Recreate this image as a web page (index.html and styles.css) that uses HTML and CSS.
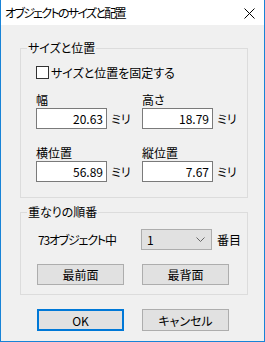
FILE: index.html
```html
<!DOCTYPE html>
<html lang="ja">
<head>
    <meta charset="UTF-8">
    <title>オブジェクトのサイズと配置</title>
    <link rel="stylesheet" href="styles.css">
</head>
<body>
    <div class="window">
        <div class="titlebar">
            <span class="title">オブジェクトのサイズと配置</span>
            <svg class="close" width="11" height="11" viewBox="0 0 11 11">
                <path d="M0.5 0.5 L10.5 10.5 M10.5 0.5 L0.5 10.5" stroke="#000" stroke-width="1" fill="none"/>
            </svg>
        </div>
        <div class="content">
            <fieldset class="group size-group">
                <legend>サイズと位置</legend>
                <label class="check"><span class="box"></span>サイズと位置を固定する</label>
                <div class="fields">
                    <div class="field">
                        <div class="field-label">幅</div>
                        <div class="field-row"><div class="input">20.63</div><span>ミリ</span></div>
                    </div>
                    <div class="field">
                        <div class="field-label">高さ</div>
                        <div class="field-row"><div class="input">18.79</div><span>ミリ</span></div>
                    </div>
                    <div class="field">
                        <div class="field-label">横位置</div>
                        <div class="field-row"><div class="input">56.89</div><span>ミリ</span></div>
                    </div>
                    <div class="field">
                        <div class="field-label">縦位置</div>
                        <div class="field-row"><div class="input">7.67</div><span>ミリ</span></div>
                    </div>
                </div>
            </fieldset>
            <fieldset class="group order-group">
                <legend>重なりの順番</legend>
                <div class="order-row">
                    <span class="count">73オブジェクト中</span>
                    <div class="select">
                        <span>1</span>
                        <svg width="9" height="5" viewBox="0 0 9 5">
                            <path d="M0.5 0.5 L4.5 4.5 L8.5 0.5" stroke="#666" stroke-width="1" fill="none"/>
                        </svg>
                    </div>
                    <span>番目</span>
                </div>
                <div class="btn-row">
                    <button class="btn">最前面</button>
                    <button class="btn">最背面</button>
                </div>
            </fieldset>
            <div class="dialog-buttons">
                <button class="btn default">OK</button>
                <button class="btn">キャンセル</button>
            </div>
        </div>
    </div>
</body>
</html>
```

FILE: styles.css
```css
body {
    margin: 0;
    font-family: "Noto Sans CJK JP", sans-serif;
    font-size: 12px;
    font-feature-settings: "palt";
    color: #000;
}
.window {
    width: 265px;
    height: 342px;
    box-sizing: border-box;
    border: 1px solid #1883d7;
    border-top: none;
    background-color: #f0f0f0;
    display: flex;
    flex-direction: column;
    overflow: hidden;
}
.titlebar {
    height: 25px;
    flex-shrink: 0;
    background-color: #fff;
    display: flex;
    align-items: center;
    justify-content: space-between;
    padding-left: 4px;
}
.title {
    line-height: 16px;
    letter-spacing: -1.7px;
    white-space: nowrap;
}
.close {
    margin-right: 9px;
    margin-top: 2px;
}
.content {
    padding: 16px 16px 0 19px;
}
.group {
    margin: 0;
    border: 1px solid #dcdcdc;
    min-width: 0;
}
.group legend {
    padding: 0 1px;
    margin-left: -9px;
    line-height: 14px;
}
.size-group {
    padding: 10px 0 15px 15px;
}
.check {
    display: flex;
    align-items: center;
    height: 15px;
    line-height: 15px;
    white-space: nowrap;
}
.box {
    width: 13px;
    height: 13px;
    box-sizing: border-box;
    border: 1px solid #333;
    background-color: #fff;
    margin-right: 2px;
}
.fields {
    display: grid;
    grid-template-columns: 106px 90px;
    row-gap: 17px;
    margin-top: 13px;
}
.field-label {
    line-height: 14px;
    white-space: nowrap;
}
.field-row {
    display: flex;
    align-items: center;
    margin-top: 1px;
    white-space: nowrap;
}
.input {
    flex-shrink: 0;
    width: 71px;
    height: 21px;
    box-sizing: border-box;
    border: 1px solid #7a7a7a;
    background-color: #fff;
    text-align: right;
    padding-right: 3px;
    line-height: 19px;
    margin-right: 4px;
}
.order-group {
    margin-top: 7px;
    padding: 10px 0 9px 15px;
}
.order-row {
    display: flex;
    align-items: center;
    height: 21px;
    white-space: nowrap;
}
.count {
    width: 105px;
    flex-shrink: 0;
    box-sizing: border-box;
    padding-left: 2px;
    letter-spacing: -1.2px;
}
.select {
    flex-shrink: 0;
    width: 71px;
    height: 21px;
    box-sizing: border-box;
    border: 1px solid #adadad;
    background-color: #e1e1e1;
    display: flex;
    align-items: center;
    justify-content: space-between;
    padding: 0 6px 0 5px;
    margin-right: 5px;
}
.btn {
    width: 87px;
    height: 21px;
    box-sizing: border-box;
    border: 1px solid #adadad;
    background-color: #e1e1e1;
    font-family: inherit;
    font-size: 12px;
    font-feature-settings: "palt";
    color: #000;
    padding: 0;
    line-height: 19px;
}
.btn-row {
    display: flex;
    gap: 18px;
    margin-top: 14px;
    margin-left: 1px;
}
.dialog-buttons {
    display: flex;
    gap: 18px;
    margin-top: 14px;
    margin-left: 17px;
}
.dialog-buttons .btn {
    height: 22px;
}
.btn.default {
    border: 2px solid #0078d7;
}
```
